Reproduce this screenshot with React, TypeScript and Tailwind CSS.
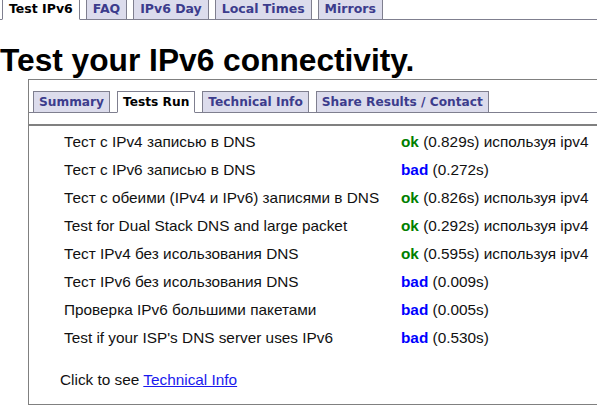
import React from "react";

const rows: { label: string; status: "ok" | "bad"; time: string; extra?: string }[] = [
  { label: "Тест с IPv4 записью в DNS", status: "ok", time: "(0.829s)", extra: "используя ipv4" },
  { label: "Тест с IPv6 записью в DNS", status: "bad", time: "(0.272s)" },
  { label: "Тест с обеими (IPv4 и IPv6) записями в DNS", status: "ok", time: "(0.826s)", extra: "используя ipv4" },
  { label: "Test for Dual Stack DNS and large packet", status: "ok", time: "(0.292s)", extra: "используя ipv4" },
  { label: "Тест IPv4 без исользования DNS", status: "ok", time: "(0.595s)", extra: "используя ipv4" },
  { label: "Тест IPv6 без исользования DNS", status: "bad", time: "(0.009s)" },
  { label: "Проверка IPv6 большими пакетами", status: "bad", time: "(0.005s)" },
  { label: "Test if your ISP's DNS server uses IPv6", status: "bad", time: "(0.530s)" },
];

function Tab({ label, active, top }: { label: string; active?: boolean; top?: boolean }) {
  return (
    <div
      className={
        "h-[22px] border border-[#7f7f8f] font-bold leading-[20px] whitespace-nowrap -mb-px " +
        (top ? "px-[6px] text-[12.5px] " : "px-[5px] text-[12.2px] ") +
        (active ? "bg-white border-b-white text-black" : "bg-[#dcdcec] text-[#3c3c8c]")
      }
      style={{ fontFamily: "Verdana, 'DejaVu Sans', sans-serif" }}
    >
      {label}
    </div>
  );
}

export default function App() {
  return (
    <div className="w-[597px] h-[406px] overflow-hidden bg-white" style={{ fontFamily: "'Liberation Sans', Arial, sans-serif" }}>
      <div className="-mt-[3px] flex items-end gap-[6px] border-b border-[#7f7f8f] pl-[2px] h-[23px]">
        <Tab top label="Test IPv6" active />
        <Tab top label="FAQ" />
        <Tab top label="IPv6 Day" />
        <Tab top label="Local Times" />
        <Tab top label="Mirrors" />
      </div>
      <h1 className="mt-[22px] text-[31.7px] font-bold leading-[37px] text-black whitespace-nowrap">
        Test your IPv6 connectivity.
      </h1>
      <div className="ml-[28px] h-[326px] border-l border-t border-b border-[#808080]">
        <div className="pt-[11px]">
          <div className="flex items-end gap-[7px] border-b border-[#7f7f8f] pl-[4px] h-[22px]">
            <Tab label="Summary" />
            <Tab label="Tests Run" active />
            <Tab label="Technical Info" />
            <Tab label="Share Results / Contact" />
          </div>
        </div>
        <div className="mt-[11px] border-t-2 border-[#808080]" />
        <div className="pt-[2px] pl-[35px] grid grid-cols-[337px_1fr] text-[15.35px] text-[#111]">
          {rows.map((r, i) => (
            <React.Fragment key={i}>
              <div className="h-[28px] leading-[28px] whitespace-nowrap">{r.label}</div>
              <div className="h-[28px] leading-[28px] whitespace-nowrap">
                <span className={"font-bold " + (r.status === "ok" ? "text-[#008000]" : "text-[#0000ff]")}>{r.status}</span>{" "}
                {r.time}
                {r.extra ? " " + r.extra : ""}
              </div>
            </React.Fragment>
          ))}
        </div>
        <div className="mt-[14px] pl-[31px] text-[15.35px] text-[#111] leading-[28px]">
          Click to see <a href="#" className="text-[#1a1aee] underline">Technical Info</a>
        </div>
      </div>
    </div>
  );
}
